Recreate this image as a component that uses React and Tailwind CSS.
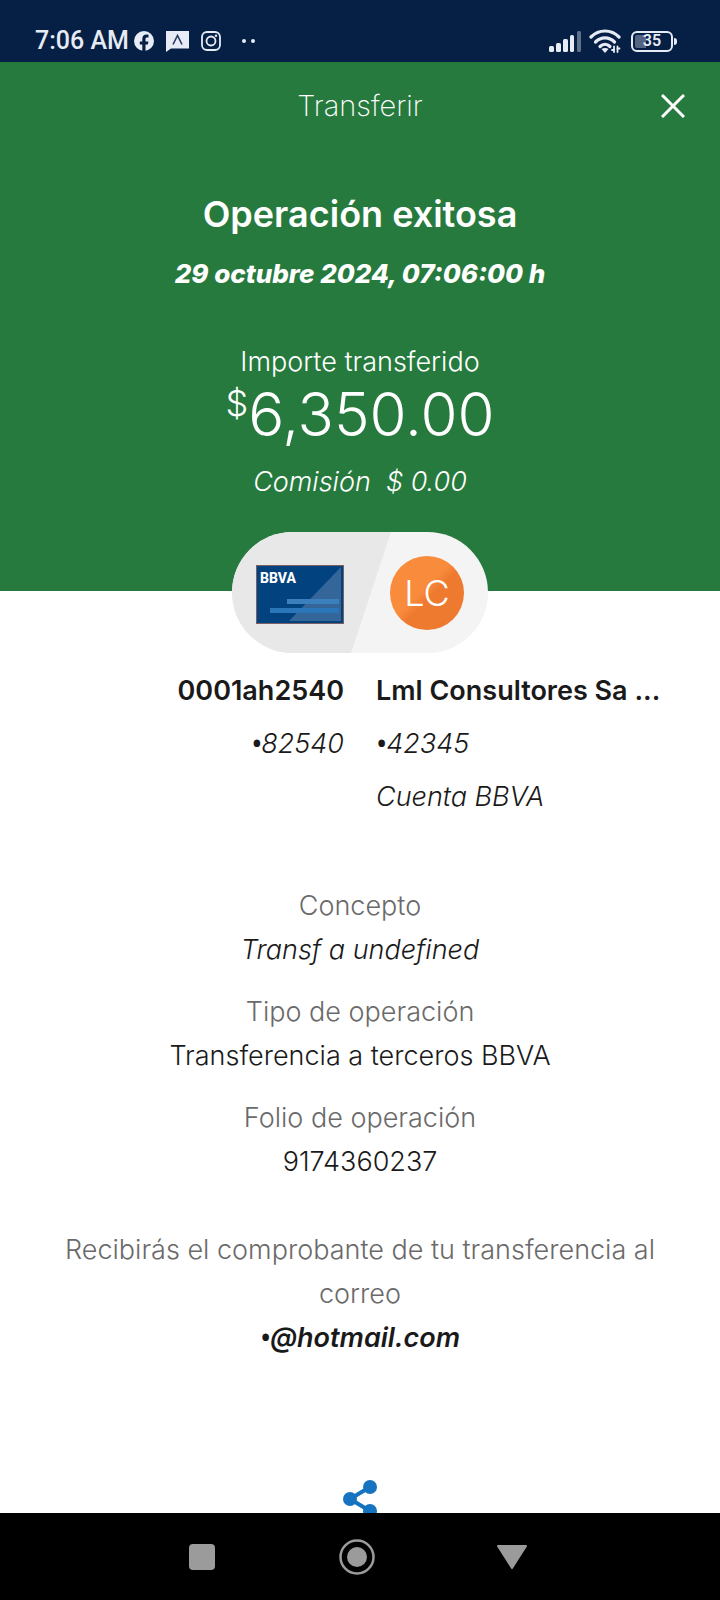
const details = [
  { label: 'Concepto', value: 'Transf a undefined', valueClass: 'italic' },
  { label: 'Tipo de operación', value: 'Transferencia a terceros BBVA', valueClass: '' },
  { label: 'Folio de operación', value: '9174360237', valueClass: '' },
];

const FacebookIcon = () => (
  <svg viewBox="0 0 20 20" className="h-5 w-5" aria-hidden="true">
    <circle cx="10" cy="10" r="10" fill="#e6ebf5" />
    <path
      d="M8.300 20v-6.500H5.800v-3h2.500V8c0-2.900 1.700-4.400 4.200-4.400 1.100 0 2 .2 2 .2v2.600h-1.400c-1.200 0-1.600.7-1.600 1.500v2.600h2.900l-.5 3h-2.400V20z"
      fill="#061f44"
    />
  </svg>
);

const ChatIcon = () => (
  <svg viewBox="0 0 23 21" className="h-[21px] w-[23px]" aria-hidden="true">
    <path d="M0 0h23v17.500H5L0 21z" fill="#e6ebf5" />
    <path d="M7 13.500 11.500 4.500 16 13.500" fill="none" stroke="#263a5c" strokeWidth="1.600" />
  </svg>
);

const InstagramIcon = () => (
  <svg viewBox="0 0 20 20" className="h-5 w-5" fill="none" stroke="#e6ebf5" strokeWidth="1.800" aria-hidden="true">
    <rect x="1" y="1" width="18" height="18" rx="5" />
    <circle cx="10" cy="10" r="4.500" />
    <circle cx="15" cy="4.800" r="1.200" fill="#e6ebf5" stroke="none" />
  </svg>
);

const SignalIcon = () => (
  <svg viewBox="0 0 32 21" className="h-[21px] w-8" fill="#e6ebf5" aria-hidden="true">
    <rect x="0" y="15" width="5" height="6" rx="1.500" />
    <rect x="7" y="12" width="5" height="9" rx="1.500" />
    <rect x="14" y="8" width="5" height="13" rx="1.500" />
    <rect x="21" y="4" width="4" height="17" rx="1.500" />
    <rect x="28" y="0" width="4" height="21" rx="1.500" opacity="0.4" />
  </svg>
);

const WifiIcon = () => (
  <svg viewBox="0 0 32 24" className="h-6 w-8" fill="none" stroke="#e6ebf5" strokeWidth="3.200" strokeLinecap="round" aria-hidden="true">
    <path d="M2 8C10 0 22 0 30 8" />
    <path d="M6.500 13c5.500-5.500 13.500-5.500 19 0" />
    <path d="M11 17.500c3-3 7-3 10 0" />
    <path d="m12.500 20 3.500 4 3.500-4c-2-1.500-5-1.500-7 0z" fill="#e6ebf5" stroke="none" />
    <path d="M24.500 18.500v5M28 18.500v5" stroke="#061f44" strokeWidth="4" />
    <path d="M25 17.500v5.500M28.500 17.500v5.500" strokeWidth="1.800" />
    <path d="M23 21h2M28.500 19.500h2" strokeWidth="1.800" />
  </svg>
);

const StatusBar = () => (
  <div className="flex h-[62px] shrink-0 items-end justify-between bg-[#061f44] pr-[43px] pb-[5px] pl-[35px] font-[Roboto,sans-serif] text-[#e6ebf5]">
    <div className="flex h-8 items-center">
      <span className="text-[25px] leading-8 font-medium">7:06 AM</span>
      <span className="ml-[5px] flex items-center gap-3">
        <FacebookIcon />
        <ChatIcon />
        <InstagramIcon />
      </span>
      <span className="ml-[21px] flex gap-[5px]">
        <span className="h-1 w-1 rounded-full bg-[#e6ebf5]"></span>
        <span className="h-1 w-1 rounded-full bg-[#e6ebf5]"></span>
      </span>
    </div>
    <div className="flex h-8 items-center gap-2">
      <SignalIcon />
      <WifiIcon />
      <div className="ml-[2px] flex items-center gap-[1px]">
        <div className="flex h-[21px] w-[42px] items-center justify-center rounded-[6px] border-2 border-[#e6ebf5] bg-linear-to-r from-[#536583] from-35% to-transparent to-35% bg-clip-content p-[2px] text-[16px] leading-none font-semibold">
          35
        </div>
        <div className="h-[7px] w-[3px] rounded-r-full bg-[#e6ebf5]"></div>
      </div>
    </div>
  </div>
);

const CardIcon = () => (
  <svg viewBox="0 0 88 59" className="h-[59px] w-[88px]" aria-label="Tarjeta BBVA">
    <rect x="0.500" y="0.500" width="87" height="58" fill="#02437f" stroke="#7b5f64" />
    <path d="M85 2v54H33z" fill="#34669a" />
    <rect x="31" y="34" width="52" height="5" fill="#3b80bd" />
    <rect x="14" y="43" width="69" height="5" fill="#2a76b8" />
    <text x="4" y="18" fill="#fff" fontSize="14" className="font-[Roboto,sans-serif] font-extrabold">BBVA</text>
  </svg>
);

const AccountsPill = () => (
  <div className="relative mx-auto -mt-[59px] flex h-[121px] w-[256px] items-center justify-between overflow-hidden rounded-full bg-[#f4f4f4] px-6">
    <svg viewBox="0 0 256 121" preserveAspectRatio="none" className="absolute inset-0 h-full w-full" aria-hidden="true">
      <path d="M0 0h159L119 121H0z" fill="#e8e8e8" />
    </svg>
    <div className="relative pt-1">
      <CardIcon />
    </div>
    <div className="relative flex h-[74px] w-[74px] items-center justify-center rounded-full bg-linear-to-br from-[#f98b3c] from-45% to-[#ee7a30] to-55% text-[36px] leading-none font-light text-white">
      LC
    </div>
  </div>
);

const Bullet = () => <span className="font-['Open_Sans',sans-serif] leading-none font-semibold">•</span>;

const NavBar = () => (
  <nav className="grid h-[87px] shrink-0 grid-cols-3 place-items-center bg-black pr-[130px] pl-[124px]">
    <button type="button" aria-label="Recientes">
      <span className="block h-[26px] w-[26px] rounded-[4px] bg-[#9b9b9b]"></span>
    </button>
    <button type="button" aria-label="Inicio">
      <svg viewBox="0 0 36 36" className="h-9 w-9">
        <circle cx="18" cy="18" r="16.500" fill="none" stroke="#9b9b9b" strokeWidth="2.500" />
        <circle cx="18" cy="18" r="10" fill="#9b9b9b" />
      </svg>
    </button>
    <button type="button" aria-label="Atrás">
      <svg viewBox="0 0 30 24" className="h-6 w-[30px]">
        <path d="M1 1h28L15 23z" fill="#9b9b9b" stroke="#9b9b9b" strokeWidth="2" strokeLinejoin="round" />
      </svg>
    </button>
  </nav>
);

export default function App() {
  return (
    <div className="flex h-screen flex-col bg-white font-[Inter,sans-serif] text-[27px] leading-[44px] text-[#1a1a1a]">
      <StatusBar />

      <main className="min-h-0 flex-1 overflow-hidden">
        <header className="bg-[#277a3e] pt-[22px] pb-[87px] text-center text-white">
          <div className="grid grid-cols-[1fr_auto_1fr] items-center px-[35px]">
            <h1 className="col-start-2 text-[29px] font-extralight">Transferir</h1>
            <button type="button" aria-label="Cerrar" className="justify-self-end">
              <svg viewBox="0 0 24 24" className="h-6 w-6" stroke="#fff" strokeWidth="3">
                <path d="m1 1 22 22M23 1 1 23" />
              </svg>
            </button>
          </div>

          <h2 className="mt-[60px] text-[36px] leading-[52px] font-semibold">Operación exitosa</h2>
          <p className="mt-3 text-[26px] font-extrabold italic">29 octubre 2024, 07:06:00 h</p>

          <p className="mt-11 font-light">Importe transferido</p>
          <p className="flex justify-center text-[60px] leading-[60px] font-light">
            <span className="text-[36px] leading-[38px]">$</span>
            6,350.00
          </p>
          <p className="mt-4 font-light whitespace-pre italic">Comisión  $ 0.00</p>
        </header>

        <AccountsPill />

        <section className="mt-[11px] grid grid-cols-2 gap-8 leading-[53px]">
          <div className="text-right">
            <p className="font-semibold">0001ah2540</p>
            <p className="font-light italic"><Bullet />82540</p>
          </div>
          <div>
            <p className="font-semibold whitespace-nowrap">Lml Consultores Sa ...</p>
            <p className="font-light italic"><Bullet />42345</p>
            <p className="font-light italic">Cuenta BBVA</p>
          </div>
        </section>

        <dl className="mt-[61px] flex flex-col gap-[18px] text-center font-light">
          {details.map((item) => (
            <div key={item.label}>
              <dt className="text-[#6a6a6a]">{item.label}</dt>
              <dd className={item.valueClass}>{item.value}</dd>
            </div>
          ))}
        </dl>

        <div className="mt-11 px-12 text-center">
          <p className="font-light text-[#6a6a6a]">Recibirás el comprobante de tu transferencia al correo</p>
          <p className="font-semibold italic"><Bullet />@hotmail.com</p>
        </div>

        <button type="button" aria-label="Compartir" className="mx-auto mt-[120px] block">
          <svg viewBox="0 0 34 38" className="h-[38px] w-[34px]" fill="#1573bf">
            <path d="M27 7 7 19l20 12" fill="none" stroke="#1573bf" strokeWidth="4" />
            <circle cx="27" cy="7" r="7" />
            <circle cx="7" cy="19" r="7" />
            <circle cx="27" cy="31" r="7" />
          </svg>
        </button>
      </main>

      <NavBar />
    </div>
  );
}
